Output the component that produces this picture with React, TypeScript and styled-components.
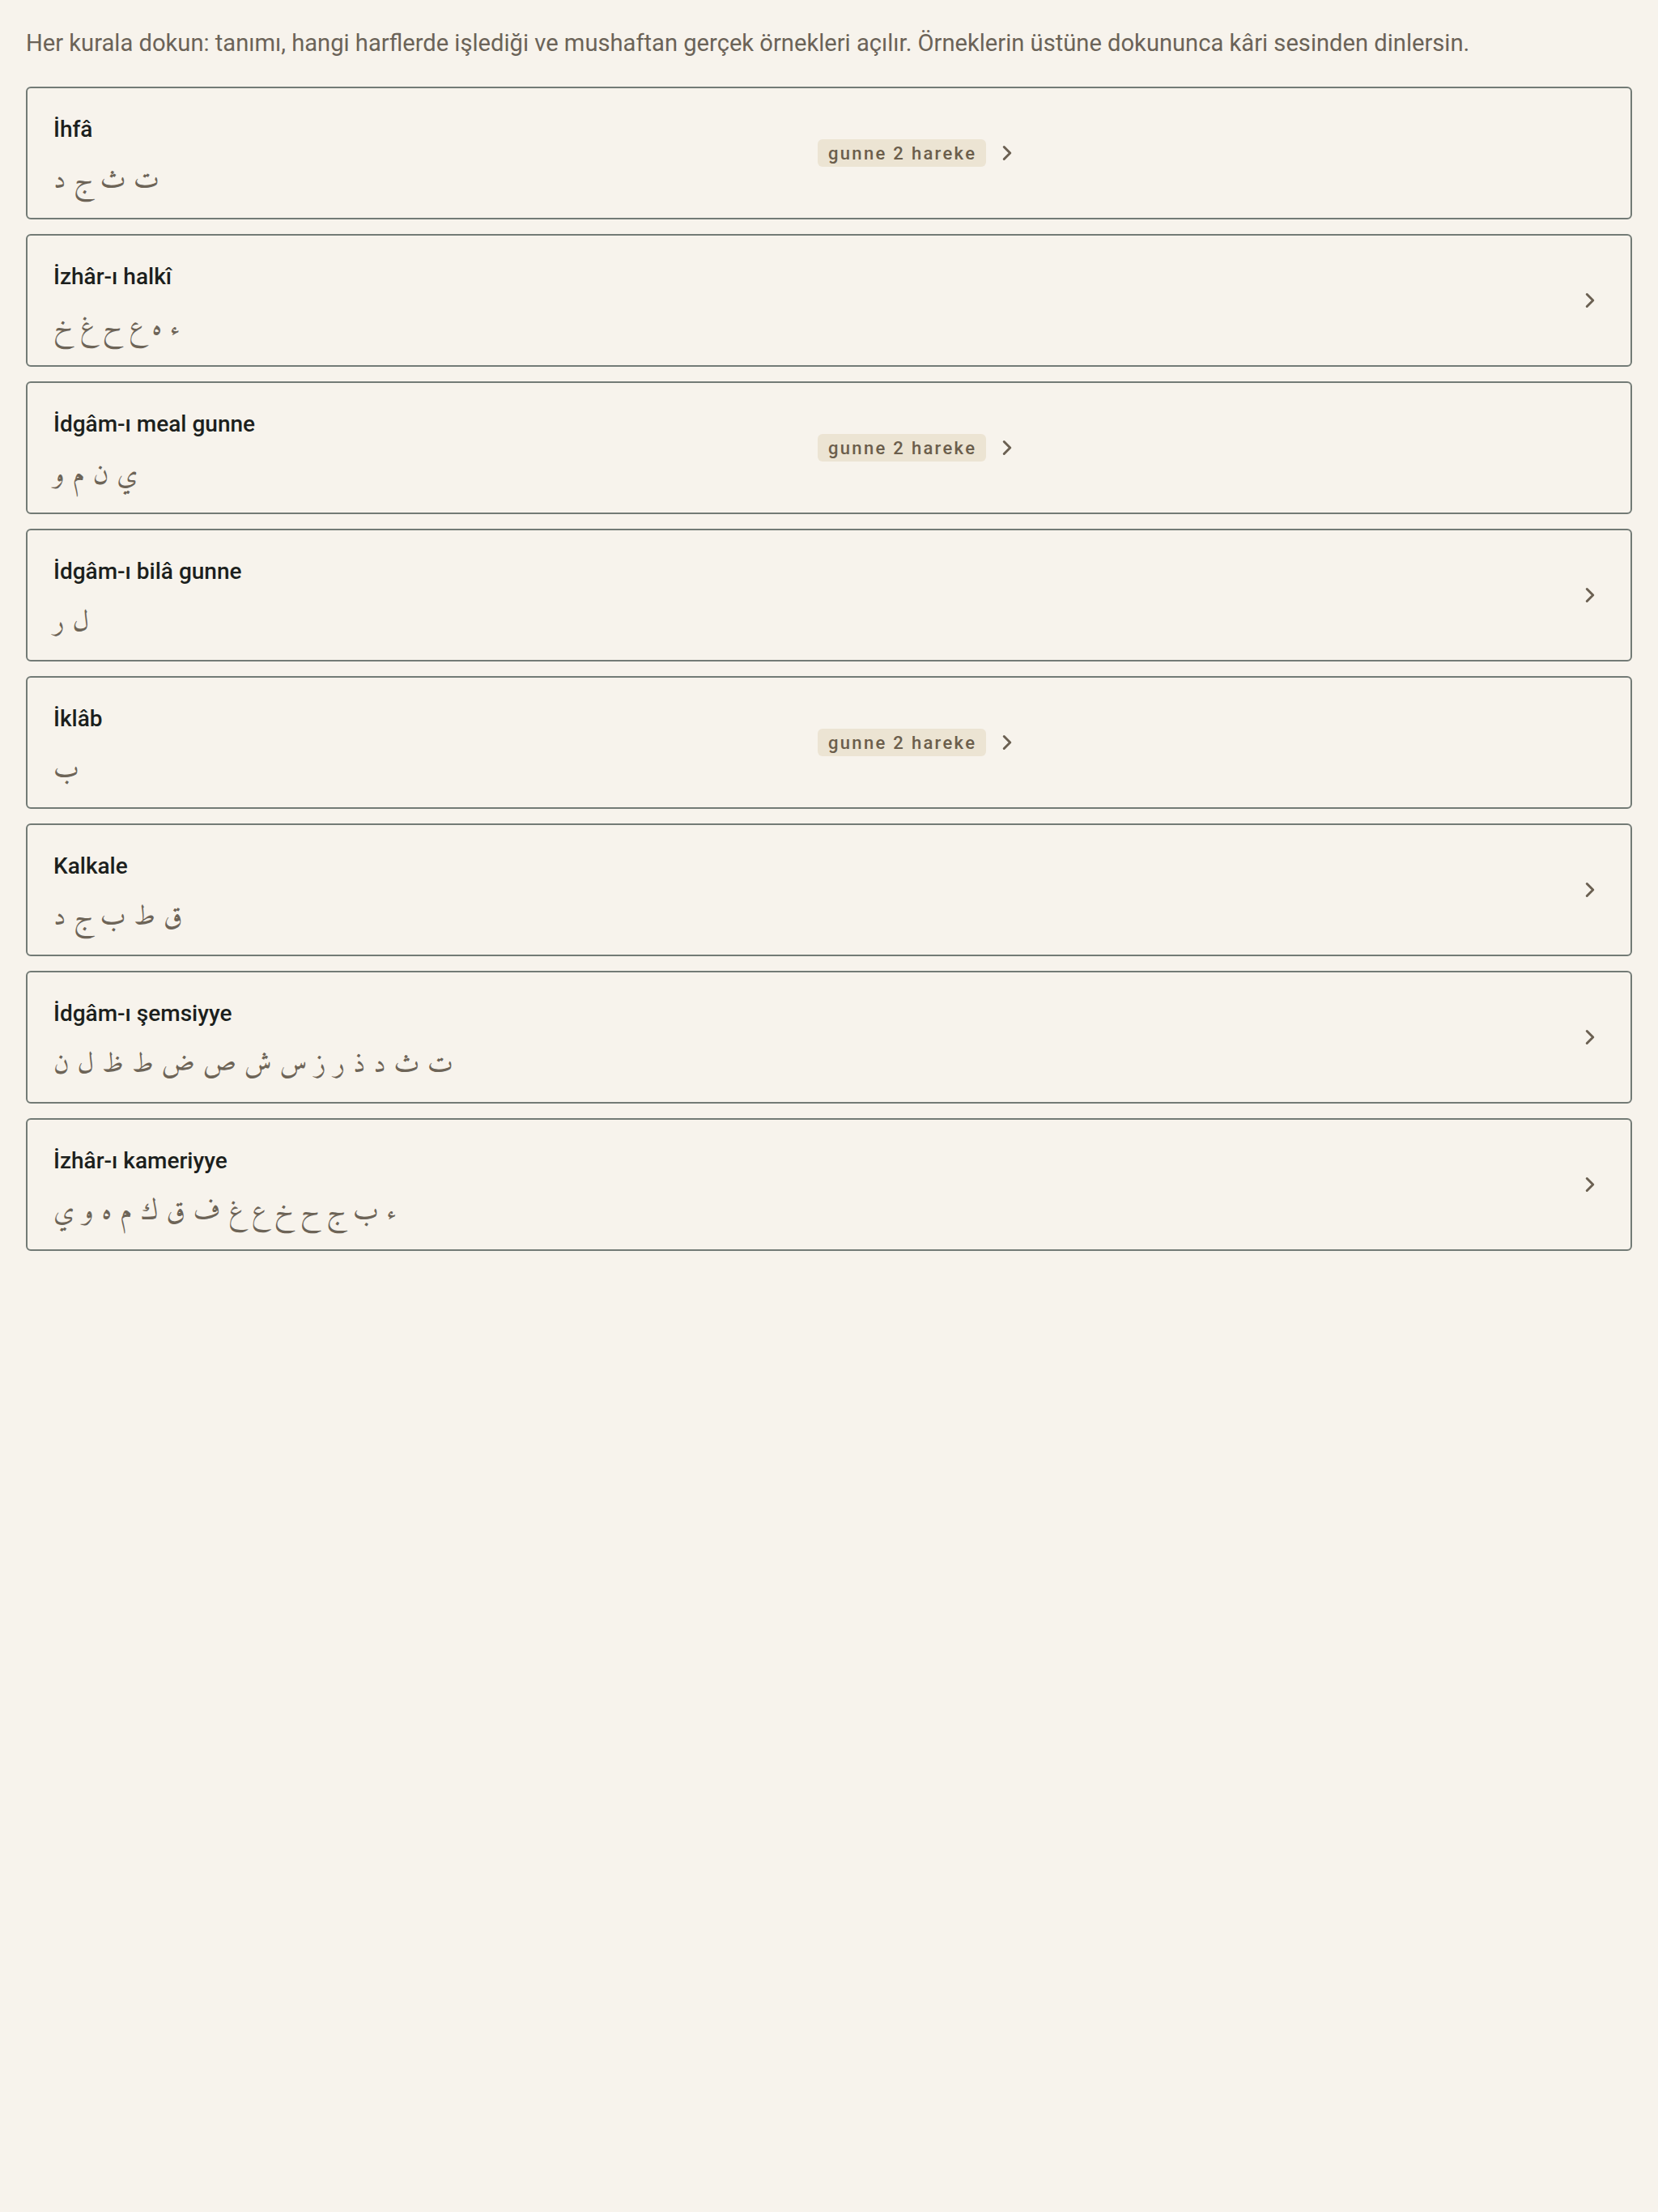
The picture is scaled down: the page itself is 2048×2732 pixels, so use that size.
import React from "react";
import styled, { createGlobalStyle } from "styled-components";
import { ChevronRight } from "lucide-react";

const GlobalStyle = createGlobalStyle`
  html, body {
    margin: 0;
    padding: 0;
    background: #f7f3ec;
  }
  body {
    font-family: Roboto, "Noto Sans", "Liberation Sans", sans-serif;
    -webkit-font-smoothing: antialiased;
  }
  * { box-sizing: border-box; }
`;

const Page = styled.main`
  min-height: 2732px;
  padding: 32px 32px 32px;
  background: #f7f3ec;
`;

const Intro = styled.p`
  margin: 0 0 33px;
  font-size: 29.15px;
  line-height: 42px;
  color: #6b6358;
`;

const List = styled.ul`
  list-style: none;
  margin: 0;
  padding: 0;
  display: flex;
  flex-direction: column;
  gap: 18px;
`;

const Card = styled.li`
  border: 2px solid #737b76;
  border-radius: 6px;
  padding: 33px 32px 19px;
  background: #f7f3ec;
  cursor: pointer;
`;

const Header = styled.div`
  display: flex;
  align-items: center;
`;

const Info = styled.div`
  flex: 0 0 calc(50% - 14px);
  min-width: 0;
  display: flex;
  flex-direction: column;
  gap: 20px;
`;

const Title = styled.div`
  font-size: 28px;
  line-height: 36px;
  font-weight: 500;
  color: #1c1f1d;
`;

const Letters = styled.div`
  font-family: "Amiri", "Noto Naskh Arabic", "Scheherazade New", "DejaVu Serif", serif;
  font-size: 34px;
  line-height: 52px;
  color: #6d6457;
  text-align: left;
`;

const Meta = styled.div<{ $end: boolean }>`
  flex: 1;
  display: flex;
  align-items: center;
  justify-content: ${(p) => (p.$end ? "flex-end" : "flex-start")};
  gap: 11px;
  align-self: stretch;
  padding-bottom: 14px;
`;

const Badge = styled.span`
  display: inline-flex;
  align-items: center;
  height: 34px;
  padding: 0 12px 0 13px;
  border-radius: 6px;
  background: #ece4d3;
  color: #6b5e4c;
  font-size: 22px;
  font-weight: 500;
  letter-spacing: 0.105em;
  white-space: nowrap;
`;

const Chevron = styled(ChevronRight)`
  flex: none;
  margin-right: 3px;
  color: #6b6052;
`;

type Rule = { title: string; letters: string; badge?: string };

const rules: Rule[] = [
  { title: "İhfâ", letters: "ت ث ج د", badge: "gunne 2 hareke" },
  { title: "İzhâr-ı halkî", letters: "ء ه ع ح غ خ" },
  { title: "İdgâm-ı meal gunne", letters: "ي ن م و", badge: "gunne 2 hareke" },
  { title: "İdgâm-ı bilâ gunne", letters: "ل ر" },
  { title: "İklâb", letters: "ب", badge: "gunne 2 hareke" },
  { title: "Kalkale", letters: "ق ط ب ج د" },
  { title: "İdgâm-ı şemsiyye", letters: "ت ث د ذ ر ز س ش ص ض ط ظ ل ن" },
  { title: "İzhâr-ı kameriyye", letters: "ء ب ج ح خ ع غ ف ق ك م ه و ي" },
];

export default function App() {
  return (
    <>
      <GlobalStyle />
      <Page>
        <Intro>
          Her kurala dokun: tanımı, hangi harflerde işlediği ve mushaftan gerçek örnekleri açılır. Örneklerin üstüne dokununca kâri sesinden dinlersin.
        </Intro>
        <List>
          {rules.map((r) => (
            <Card key={r.title}>
              <Header>
                <Info>
                  <Title>{r.title}</Title>
                  <Letters>{r.letters}</Letters>
                </Info>
                <Meta $end={!r.badge}>
                  {r.badge && <Badge>{r.badge}</Badge>}
                  <Chevron size={30} strokeWidth={2.4} />
                </Meta>
              </Header>
            </Card>
          ))}
        </List>
      </Page>
    </>
  );
}
